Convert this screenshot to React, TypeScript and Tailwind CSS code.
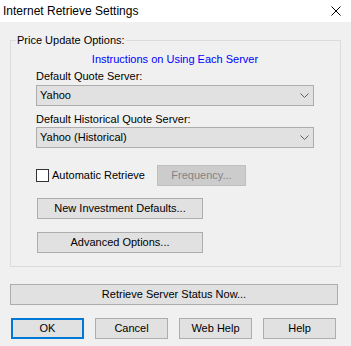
import { ReactNode } from 'react';

// Win10-style "Internet Retrieve Settings" dialog

function Chevron() {
  return (
    <svg width="9" height="5" viewBox="0 0 9 5" className="shrink-0">
      <polyline points="0.5,0.5 4.5,4.5 8.5,0.5" fill="none" stroke="#606060" strokeWidth="1" />
    </svg>
  );
}

function Combo({ value }: { value: string }) {
  return (
    <div className="w-[278px] h-[21px] bg-[#e1e1e1] border border-[#adadad] flex items-center justify-between pl-[3px] pr-[4px]">
      <span>{value}</span>
      <Chevron />
    </div>
  );
}

interface BtnProps {
  children: ReactNode;
  className?: string;
  primary?: boolean;
  disabled?: boolean;
}

function Btn({ children, className = '', primary, disabled }: BtnProps) {
  const tone = disabled
    ? 'bg-[#cccccc] border border-[#bfbfbf] text-[#838383]'
    : primary
      ? 'bg-[#e1e1e1] border-2 border-[#0078d7]'
      : 'bg-[#e1e1e1] border border-[#adadad]';
  return (
    <div className={`h-[21px] flex items-center justify-center ${tone} ${className}`}>
      {children}
    </div>
  );
}

export default function App() {
  return (
    <div className="w-[351px] h-[346px] bg-[#f0f0f0] text-[11px] leading-[15px] text-black font-['Liberation_Sans',Arial,sans-serif] flex flex-col overflow-hidden">
      <div className="h-[22px] shrink-0 bg-white flex items-center justify-between pl-[3px] pr-[10px]">
        <span className="text-[12px]">Internet Retrieve Settings</span>
        <svg width="10" height="10" viewBox="0 0 10 10">
          <path d="M0.5 0.5 L9.5 9.5 M9.5 0.5 L0.5 9.5" stroke="#000" strokeWidth="1" />
        </svg>
      </div>

      <div className="relative mt-[18px] ml-[10px] w-[331px] h-[227px] shrink-0 border border-[#dcdcdc] pl-[25px] pt-[11px] flex flex-col">
        <span className="absolute -top-[8px] left-[5px] bg-[#f0f0f0] px-[1px]">Price Update Options:</span>

        <div className="w-[278px] text-center text-[#0000ff]">Instructions on Using Each Server</div>

        <div className="mt-[2px]">Default Quote Server:</div>
        <div className="mt-[1px]">
          <Combo value="Yahoo" />
        </div>

        <div className="mt-[6px]">Default Historical Quote Server:</div>
        <Combo value="Yahoo (Historical)" />

        <div className="mt-[17px] flex items-center">
          <div className="w-[13px] h-[13px] shrink-0 bg-white border border-[#333333]" />
          <span className="ml-[3px] w-[105px] shrink-0 whitespace-nowrap">Automatic Retrieve</span>
          <Btn disabled className="w-[89px]">Frequency...</Btn>
        </div>

        <Btn className="mt-[12px] ml-[1px] w-[166px]">New Investment Defaults...</Btn>
        <Btn className="mt-[13px] ml-[1px] w-[166px]">Advanced Options...</Btn>
      </div>

      <Btn className="mt-[17px] ml-[10px] w-[328px] shrink-0">Retrieve Server Status Now...</Btn>

      <div className="mt-[13px] ml-[11px] flex gap-[11px] shrink-0">
        <Btn primary className="w-[73px]">OK</Btn>
        <Btn className="w-[73px]">Cancel</Btn>
        <Btn className="w-[73px]">Web Help</Btn>
        <Btn className="w-[73px]">Help</Btn>
      </div>
    </div>
  );
}
